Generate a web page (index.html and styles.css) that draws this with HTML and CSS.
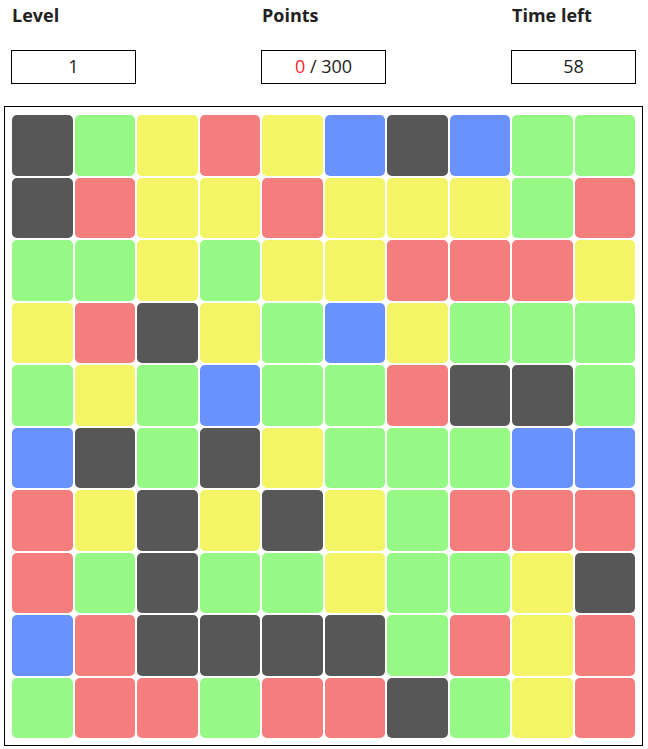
FILE: index.html
```html
<!DOCTYPE html>
<html lang="en">
<head>
<meta charset="UTF-8">
<meta name="viewport" content="width=device-width, initial-scale=1.0">
<title>Colors</title>
<link rel="stylesheet" href="styles.css">
</head>
<body>
<div class="stats">
   <div class="stat">
      <div class="stat-label">Level</div>
      <div class="stat-box">1</div>
   </div>
   <div class="stat">
      <div class="stat-label">Points</div>
      <div class="stat-box"><span class="score">0</span> / 300</div>
   </div>
   <div class="stat">
      <div class="stat-label">Time left</div>
      <div class="stat-box">58</div>
   </div>
</div>
<div id="board" class="board"></div>
<script>
  // d = dark, g = green, y = yellow, r = red, b = blue
  var rows = [
    'dgyrybdbgg',
    'dryyryyygr',
    'ggygyyrrry',
    'yrdygbyggg',
    'gygbggrddg',
    'bdgdygggbb',
    'rydydygrrr',
    'rgdggyggyd',
    'brddddgryr',
    'grrgrrdgyr'
  ];
  var names = { d: 'dark', g: 'green', y: 'yellow', r: 'red', b: 'blue' };
  var board = document.getElementById('board');
  for (var i = 0; i < rows.length; i++) {
    for (var j = 0; j < rows[i].length; j++) {
      var tile = document.createElement('div');
      tile.className = 'tile ' + names[rows[i].charAt(j)];
      board.appendChild(tile);
    }
  }
</script>
</body>
</html>
```

FILE: styles.css
```css
 body {
    margin: 0;
    background-color: #fff;
    font-family: "Open Sans", "Noto Sans", sans-serif;
    color: #222;
 }
 .stats {
    display: flex;
    padding: 3px 0 0 11px;
 }
 .stat {
    width: 250px;
    flex-shrink: 0;
 }
 .stat:last-child {
    width: auto;
 }
 .stat-label {
    font-size: 18px;
    font-weight: 700;
    line-height: 24px;
    padding-left: 1px;
    margin-bottom: 23px;
 }
 .stat-box {
    box-sizing: border-box;
    width: 125px;
    height: 34px;
    border: 1px solid #000;
    text-align: center;
    font-size: 18px;
    line-height: 31px;
 }
 .score {
    color: #ff1f2f;
 }
 /* Game board */
 .board {
    box-sizing: border-box;
    width: 639px;
    height: 640px;
    margin: 22px 0 0 4px;
    border: 1px solid #000;
    padding: 8px 7px 7px 7px;
    display: grid;
    grid-template-columns: repeat(10, 1fr);
    grid-template-rows: repeat(10, 1fr);
    gap: 2px;
 }
 .tile {
    border-radius: 5px;
 }
 .dark { background-color: #575757; }
 .green { background-color: #96f985; }
 .yellow { background-color: #f3f466; }
 .red { background-color: #f47d7d; }
 .blue { background-color: #6a92ff; }
```
